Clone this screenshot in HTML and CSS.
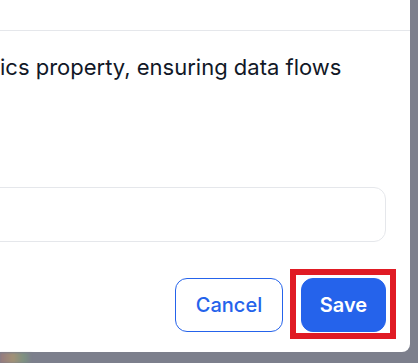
FILE: index.html
```html
<!DOCTYPE html>
<html lang="en">
<head>
<meta charset="utf-8">
<title>Modal</title>
<link rel="stylesheet" href="styles.css">
</head>
<body>
<div class="backdrop">
  <div class="modal">
    <div class="modal-header"></div>
    <div class="modal-body">
      <p class="desc">ics property, ensuring data flows</p>
      <div class="field"></div>
    </div>
    <div class="modal-footer">
      <button class="btn btn-cancel" type="button">Cancel</button>
      <span class="save-wrap">
        <button class="btn btn-save" type="button">Save</button>
        <span class="highlight"></span>
      </span>
    </div>
  </div>
  <div class="bg-peek"></div>
</div>
</body>
</html>
```
FILE: styles.css
```css
html, body {
  margin: 0;
  padding: 0;
}
body {
  width: 418px;
  height: 363px;
  overflow: hidden;
  background: #7c7f8c;
  font-family: Inter, "Noto Sans", sans-serif;
}
.backdrop {
  position: relative;
  width: 418px;
  height: 363px;
}
.modal {
  width: 410px;
  height: 352px;
  background: #ffffff;
  border-bottom-right-radius: 8px;
  display: flex;
  flex-direction: column;
  overflow: hidden;
}
.modal-header {
  height: 30px;
  flex: none;
  border-bottom: 1px solid #e5e7eb;
}
.modal-body {
  padding: 0 24px 0 0;
}
.desc {
  margin: 21px 0 0 0;
  font-size: 22px;
  line-height: 30px;
  color: #111827;
  white-space: nowrap;
}
.field {
  margin: 105px 0 0 -20px;
  height: 53px;
  border: 1px solid #e5e7eb;
  border-radius: 12px;
}
.modal-footer {
  display: flex;
  justify-content: flex-end;
  align-items: center;
  gap: 18px;
  padding: 36px 24px 0 0;
}
.btn {
  font-family: Inter, "Noto Sans", sans-serif;
  font-size: 20px;
  height: 54px;
  border-radius: 12px;
  cursor: pointer;
}
.btn-cancel {
  width: 108px;
  background: #ffffff;
  color: #2563eb;
  border: 1px solid #2563eb;
  font-weight: 500;
}
.btn-save {
  width: 85px;
  background: #2563eb;
  color: #ffffff;
  border: 1px solid #2563eb;
  font-weight: 600;
}
.save-wrap {
  position: relative;
  display: flex;
}
.highlight {
  position: absolute;
  left: -11px;
  top: -9px;
  right: -10px;
  bottom: -7px;
  border: 6px solid #e01b24;
  pointer-events: none;
}
.bg-peek {
  position: absolute;
  left: 0;
  bottom: 0;
  width: 32px;
  height: 10px;
  background: linear-gradient(90deg, #a0787a 0%, #b39a6e 40%, #7e9a7e 75%, #7c7f8c 100%);
  filter: blur(1px);
  opacity: 0.7;
}
```
